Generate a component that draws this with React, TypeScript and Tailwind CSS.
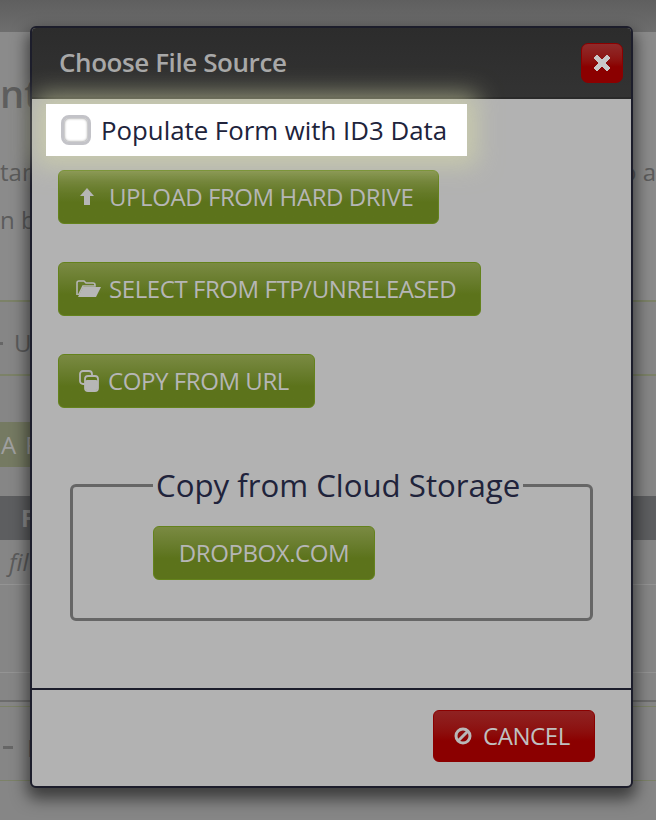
import React from "react";

function GreenBtn({ icon, label, w, pl }: { icon?: React.ReactNode; label: string; w: string; pl: string }) {
  return (
    <button className={`${w} ${pl} flex h-[54px] shrink-0 items-center rounded-[6px] border border-[#64821c] bg-gradient-to-b from-[#7a8a42] to-[#5c731b] to-60% text-[24px] tracking-[-0.42px] text-[#b6b6b6]`}>
      {icon}
      <span>{label}</span>
    </button>
  );
}

function Page() {
  const text = "text-[24px] text-[#5c5c5c]";
  return (
    <div className="flex h-[820px] w-full flex-col bg-[#868686]">
      <div className="h-8 shrink-0 bg-gradient-to-b from-[#5f5f5f] to-[#6e6e6e]" />
      <div className="h-[270px] shrink-0 border-b-2 border-[#7c8268] bg-[#8b8b8b]">
        <div className="mt-[36px] text-[38px] font-semibold leading-[50px] text-[#5e5e5e]">nt</div>
        <div className="mt-[30px] flex justify-between">
          <div className={`${text} leading-[48px]`}>tan<br />n b</div>
          <div className={`${text} leading-[48px]`}>o a</div>
        </div>
      </div>
      <div className={`${text} flex h-[74px] shrink-0 items-center gap-[11px] border-b-2 border-[#7c8268] pt-[10px]`}><span className="h-[3px] w-[3px] bg-[#666]" /><span>U</span></div>
      <div className="h-[46px] shrink-0" />
      <div className="flex h-[45px] w-[40px] shrink-0 items-center gap-[9px] bg-[#757a62] pl-[1px] text-[24px] text-[#a0a0a0]"><span>A</span><span>F</span></div>
      <div className="h-[29px] shrink-0" />
      <div className="flex h-[44px] shrink-0 items-center bg-[#5d5e60] pl-[21px] text-[24px] font-bold text-[#8d8d8d]">F</div>
      <div className={`${text} flex h-[45px] shrink-0 items-center border-b border-[#949494] pl-[9px] italic`}>fil</div>
      <div className="h-[88px] shrink-0 border-b border-[#949494]" />
      <div className="h-[29px] shrink-0 border-b-2 border-[#6c6c6c]" />
      <div className="h-[5px] shrink-0 border-b border-[#7c8268]" />
      <div className={`${text} flex h-[74px] shrink-0 items-center gap-[14px] border-b border-[#7c8268] pl-[3px] pt-[8px]`}><span className="h-[3px] w-[10px] bg-[#666]" /><span>E</span></div>
    </div>
  );
}

export default function App() {
  return (
    <div className="relative h-[820px] w-[656px] overflow-hidden font-['Open_Sans',sans-serif]">
      <Page />
      <div className="absolute left-[30px] top-[26px] flex h-[762px] w-[603px] flex-col rounded-[6px] border-2 border-[#1c1d2b] bg-[#b2b2b2] shadow-[0_8px_16px_3px_rgba(0,0,0,0.55)]">
        <div className="flex h-[71px] shrink-0 items-center justify-between rounded-t-[4px] border-b-2 border-[#2a2a2a] bg-gradient-to-b from-[#2c2c2c] to-[#333333] pl-[27px] pr-[8px]">
          <span className="text-[26px] font-semibold tracking-[-0.42px] text-[#a8a8a8]">Choose File Source</span>
          <span className="flex h-[40px] w-[42px] items-center justify-center rounded-[7px] border border-[#8b0000] bg-gradient-to-b from-[#8f2a2a] to-[#8b0000] to-60%">
            <svg width="20" height="20" viewBox="0 0 20 20"><path d="M2 5 L5 2 L10 7 L15 2 L18 5 L13 10 L18 15 L15 18 L10 13 L5 18 L2 15 L7 10Z" fill="#c8c8c8" stroke="#c8c8c8" strokeLinejoin="round" /></svg>
          </span>
        </div>
        <div className="relative flex min-h-0 flex-1 flex-col px-[26px]">
          <label className="absolute left-[14px] top-[5px] flex h-[52px] w-[421px] items-center bg-white pl-[15px] text-[25.8px] text-[#20233b] shadow-[0_0_24px_10px_rgba(215,218,170,0.6)]">
            <span className="mr-[10px] box-border h-[30px] w-[30px] rounded-[8px] border-[3px] border-[#c3c3c8] bg-white shadow-[inset_0_0_3px_#777]" />
            <span>Populate Form with ID3 Data</span>
          </label>
          <div className="mt-[71px] flex flex-col items-start gap-[38px]">
            <GreenBtn
              w="w-[381px]"
              pl="pl-[20px]"
              label="UPLOAD FROM HARD DRIVE"
              icon={
                <svg width="16" height="18" viewBox="0 0 16 18" className="mr-[14px]"><path d="M8 0 L15 8 L11 8 L11 17 L5 17 L5 8 L1 8Z" fill="#b6b6b6" /></svg>
              }
            />
            <GreenBtn
              w="w-[423px]"
              pl="pl-[17px]"
              label="SELECT FROM FTP/UNRELEASED"
              icon={
                <svg width="26" height="18" viewBox="0 0 26 18" className="mr-[7px]"><path d="M1 15 V3 Q1 1 3 1 H8 L10 3 H17 Q19 3 19 5 V6 H7 L2.5 15" fill="none" stroke="#b6b6b6" strokeWidth="1.6" /><path d="M7 7 H25 L20 17 H2Z" fill="#b6b6b6" /></svg>
              }
            />
            <GreenBtn
              w="w-[257px]"
              pl="pl-[20px]"
              label="COPY FROM URL"
              icon={
                <svg width="20" height="22" viewBox="0 0 20 22" className="mr-[9px]"><rect x="1" y="1" width="12" height="13" rx="3" fill="none" stroke="#b6b6b6" strokeWidth="1.8" /><rect x="6" y="6" width="13" height="15" rx="3" fill="#5f761d" stroke="#b6b6b6" strokeWidth="1.8" /><rect x="6" y="10" width="13" height="10" rx="2" fill="#b6b6b6" /></svg>
              }
            />
          </div>
          <fieldset className="mx-[12px] mt-[60px] h-[153px] rounded-[6px] border-[3px] border-[#666666] pl-[80px]">
            <legend className="px-[3px] text-[31.2px] leading-[34px] text-[#20233b]">Copy from Cloud Storage</legend>
            <div className="mt-[24px]">
              <GreenBtn w="w-[222px]" pl="justify-center" label="DROPBOX.COM" />
            </div>
          </fieldset>
        </div>
        <div className="flex h-[98px] shrink-0 items-start justify-end border-t-2 border-[#1c1d2b] pr-[36px] pt-[20px]">
          <button className="flex h-[52px] w-[162px] items-center rounded-[6px] border border-[#8b0000] bg-gradient-to-b from-[#8f2222] to-[#8b0000] to-60% pl-[20px] text-[24px] tracking-[-0.42px] text-[#c0c0c0]">
            <svg width="18" height="18" viewBox="0 0 18 18" className="mr-[11px]"><circle cx="9" cy="9" r="7" fill="none" stroke="#b8b8b8" strokeWidth="3" /><path d="M4 14 L14 4" stroke="#b8b8b8" strokeWidth="3" /></svg>
            CANCEL
          </button>
        </div>
      </div>
    </div>
  );
}
